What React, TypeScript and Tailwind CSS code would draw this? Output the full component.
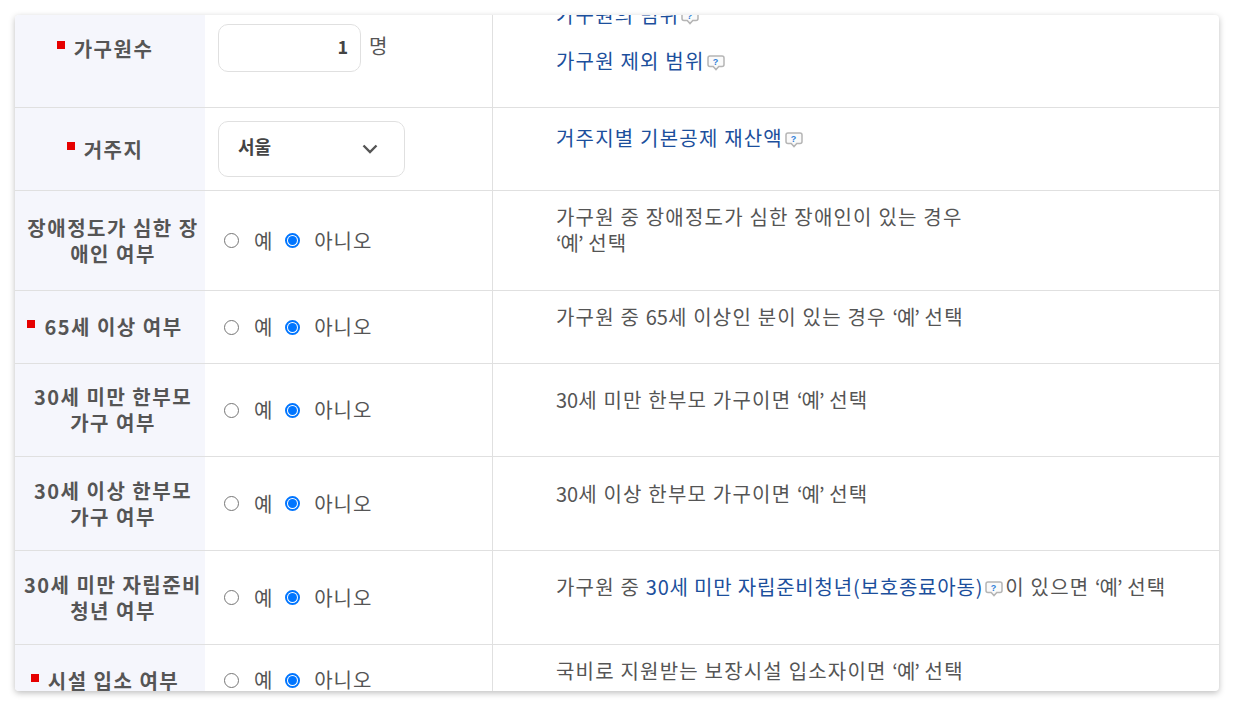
import React from "react";

const font = '"Noto Sans CJK KR", "Noto Sans", sans-serif';

function HelpIcon() {
    return (
        <svg width="18" height="16" viewBox="0 0 18 16" className="inline-block align-[-2px] mx-[2px]">
            <path d="M3 1h12a2 2 0 0 1 2 2v6.5a2 2 0 0 1-2 2h-3.2L9 14.6l-2.8-3.1H3a2 2 0 0 1-2-2V3a2 2 0 0 1 2-2z" fill="#fafafa" stroke="#b5b5b5" strokeWidth="1.5" />
            <text x="9" y="9.6" textAnchor="middle" fontSize="9" fontWeight="700" fill="#2f80d8" fontFamily="Liberation Sans, sans-serif">?</text>
        </svg>
    );
}

function Bullet({ className = "align-[7px]" }: { className?: string }) {
    return <span className={`inline-block w-2 h-2 bg-[#e60000] mr-[9px] ${className}`} />;
}

// quotes and digits run narrower than hangul in the reference
function Ye() {
    return <span className="tracking-[-1px]">‘예’</span>;
}

function Num({ children }: { children: React.ReactNode }) {
    return <span className="tracking-[0px]">{children}</span>;
}

function YesNo() {
    return (
        <div className="flex items-center text-[20px] leading-6 tracking-[0.9px] text-[#555]">
            <span className="w-[15px] h-[15px] rounded-full border border-[#767676] bg-white ml-[6px]" />
            <span className="ml-[15px]">예</span>
            <span className="w-[15px] h-[15px] rounded-full border-2 border-[#0075ff] bg-white ml-[12px] flex items-center justify-center">
                <span className="w-[9px] h-[9px] rounded-full bg-[#0075ff]" />
            </span>
            <span className="ml-[14px]">아니오</span>
        </div>
    );
}

type RowProps = {
    heightClass: string;
    label: React.ReactNode;
    field: React.ReactNode;
    note: React.ReactNode;
    noteClass: string;
    last?: boolean;
};

function Row(props: RowProps) {
    return (
        <div className={`flex ${props.heightClass} ${props.last ? "" : "border-b border-[#e0e0e0]"}`}>
            <div className="w-[190px] shrink-0 bg-[#f5f6fc] flex items-center justify-center text-center font-bold text-[20px] leading-[26px] tracking-[1.5px] text-[#555] pl-[6px] whitespace-nowrap">
                <div>{props.label}</div>
            </div>
            <div className="w-[288px] shrink-0 border-r border-[#e0e0e0] pl-[13px] flex items-center">
                {props.field}
            </div>
            <div className={`flex-1 pl-[63px] text-[20px] leading-[26px] tracking-[1.2px] whitespace-nowrap ${props.noteClass}`}>
                {props.note}
            </div>
        </div>
    );
}

export default function App() {
    return (
        <div className="w-[1234px] h-[706px] bg-white p-[15px]" style={{ fontFamily: font }}>
            <div className="w-[1204px] h-[676px] overflow-hidden bg-white rounded-[4px] shadow-[0_2px_6px_rgba(0,0,0,0.26)]">
                <Row
                    heightClass="h-[93px]"
                    label={<span className="relative -top-[12px] mr-[16px]"><Bullet className="align-[8px]" />가구원수</span>}
                    field={
                        <div className="flex items-start self-start pt-[9px] text-[20px] tracking-[0.9px] text-[#555]">
                            <div className="w-[143px] h-[48px] border border-[#e0e0e0] rounded-[10px] flex items-center justify-end pr-[11px] pb-[3px] text-[18px] font-bold text-[#444]">1</div>
                            <span className="ml-[8px] leading-[44px]">명</span>
                        </div>
                    }
                    noteClass="-mt-[13px] text-[#1c4f9c]"
                    note={
                        <div>
                            <div>가구원의 범위<HelpIcon /></div>
                            <div className="mt-[20px]">가구원 제외 범위<HelpIcon /></div>
                        </div>
                    }
                />
                <Row
                    heightClass="h-[83px]"
                    label={<span className="relative top-[1px] mr-[16px]"><Bullet className="align-[8px]" />거주지</span>}
                    field={
                        <div className="w-[187px] h-[56px] border border-[#e0e0e0] rounded-[10px] flex items-center justify-between pl-[19px] pr-[26px] pb-[5px] text-[18px] font-bold text-[#444]">
                            서울
                            <svg width="16" height="10" viewBox="0 0 16 10" fill="none" className="mt-[4px]"><path d="M1.5 1.5 8 8l6.5-6.5" stroke="#555" strokeWidth="2.4" /></svg>
                        </div>
                    }
                    noteClass="pt-[17px] text-[#1c4f9c]"
                    note={<div>거주지별 기본공제 재산액<HelpIcon /></div>}
                />
                <Row
                    heightClass="h-[100px]"
                    label={<>장애정도가 심한 장<br />애인 여부</>}
                    field={<YesNo />}
                    noteClass="pt-[13px] text-[#555]"
                    note={<div>가구원 중 장애정도가 심한 장애인이 있는 경우<br /><Ye /> 선택</div>}
                />
                <Row
                    heightClass="h-[73px]"
                    label={<span className="mr-[16px]"><Bullet />65세 이상 여부</span>}
                    field={<YesNo />}
                    noteClass="pt-[13px] text-[#555]"
                    note={<div>가구원 중 <Num>65</Num>세 이상인 분이 있는 경우 <Ye /> 선택</div>}
                />
                <Row
                    heightClass="h-[93px]"
                    label={<>30세 미만 한부모<br />가구 여부</>}
                    field={<YesNo />}
                    noteClass="pt-[23px] text-[#555]"
                    note={<div><Num>30</Num>세 미만 한부모 가구이면 <Ye /> 선택</div>}
                />
                <Row
                    heightClass="h-[94px]"
                    label={<>30세 이상 한부모<br />가구 여부</>}
                    field={<YesNo />}
                    noteClass="pt-[24px] text-[#555]"
                    note={<div><Num>30</Num>세 이상 한부모 가구이면 <Ye /> 선택</div>}
                />
                <Row
                    heightClass="h-[94px]"
                    label={<>30세 미만 자립준비<br />청년 여부</>}
                    field={<YesNo />}
                    noteClass="pt-[23px] text-[#555]"
                    note={<div>가구원 중 <span className="text-[#1c4f9c] tracking-[0.8px]">30세 미만 자립준비청년(보호종료아동)<HelpIcon /></span>이 있으면 <Ye /> 선택</div>}
                />
                <Row
                    heightClass="h-[72px]"
                    last
                    label={<span className="mr-[16px]"><Bullet />시설 입소 여부</span>}
                    field={<div className="-mt-[2px]"><YesNo /></div>}
                    noteClass="pt-[13px] text-[#555]"
                    note={<div>국비로 지원받는 보장시설 입소자이면 <Ye /> 선택</div>}
                />
            </div>
        </div>
    );
}
